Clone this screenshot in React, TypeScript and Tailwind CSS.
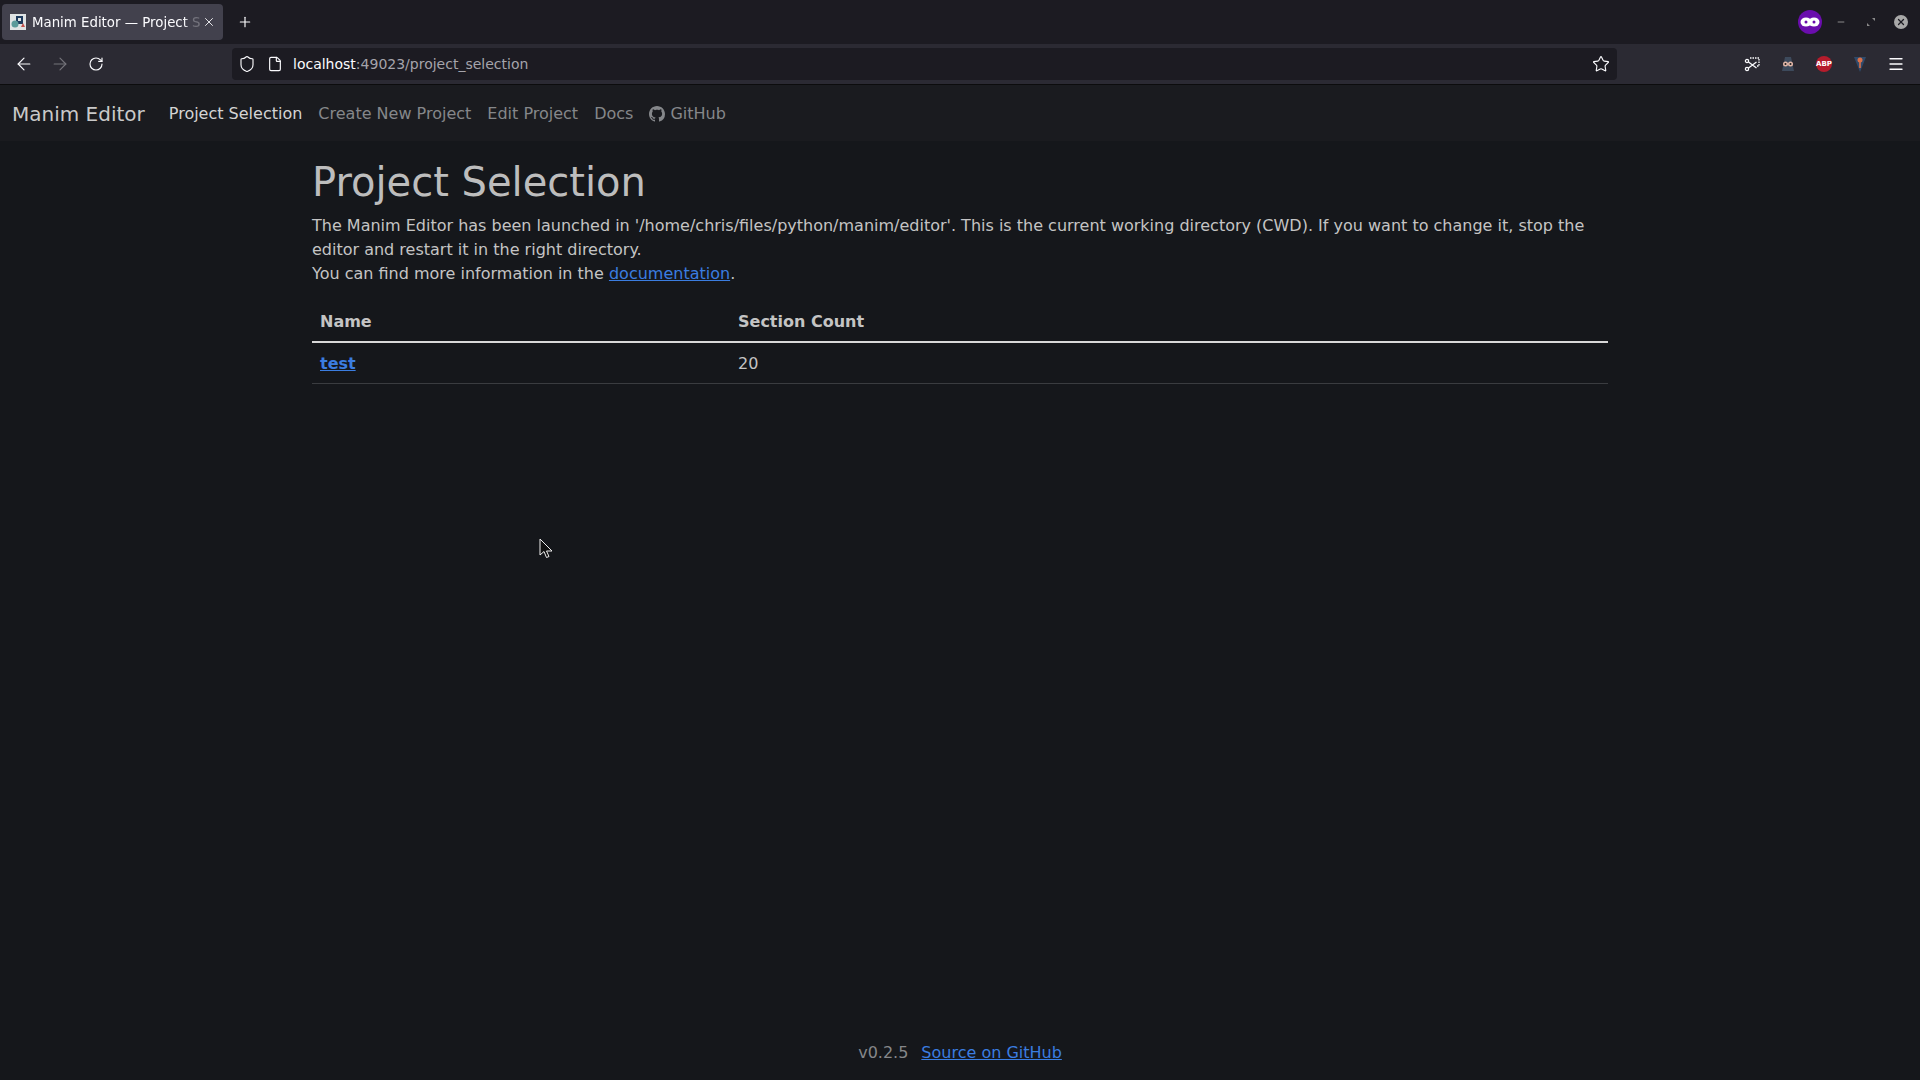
import { ArrowLeft, ArrowRight, RotateCw, Shield, File, Star, Menu, Plus, X, Minus } from "lucide-react";

function GithubIcon() {
  return (
    <svg viewBox="0 0 16 16" width="16" height="16" fill="currentColor" className="mr-[5px]">
      <path d="M8 0C3.58 0 0 3.58 0 8c0 3.54 2.29 6.53 5.47 7.59.4.07.55-.17.55-.38 0-.19-.01-.82-.01-1.49-2.01.37-2.53-.49-2.69-.94-.09-.23-.48-.94-.82-1.13-.28-.15-.68-.52-.01-.53.63-.01 1.08.58 1.23.82.72 1.21 1.87.87 2.33.66.07-.52.28-.87.51-1.07-1.78-.2-3.64-.89-3.64-3.95 0-.87.31-1.59.82-2.15-.08-.2-.36-1.02.08-2.12 0 0 .67-.21 2.2.82.64-.18 1.32-.27 2-.27s1.36.09 2 .27c1.53-1.04 2.2-.82 2.2-.82.44 1.1.16 1.92.08 2.12.51.56.82 1.27.82 2.15 0 3.07-1.87 3.75-3.65 3.95.29.25.54.73.54 1.48 0 1.07-.01 1.93-.01 2.2 0 .21.15.46.55.38A8.01 8.01 0 0 0 16 8c0-4.42-3.58-8-8-8z" />
    </svg>
  );
}

function Favicon() {
  return (
    <svg viewBox="0 0 16 16" width="16" height="16" className="mr-[6px] shrink-0">
      <rect width="16" height="16" fill="#dfe3e4" />
      <rect x="6" y="2" width="7" height="8" fill="#1d3a5c" />
      <rect x="8" y="4" width="3" height="3" fill="#dfe3e4" />
      <circle cx="5" cy="10" r="3.5" fill="#5a9a9a" />
      <path d="M11 13l2-4 2 4z" fill="#c2504a" />
    </svg>
  );
}

function BrowserChrome() {
  return (
    <div className="shrink-0 font-['DejaVu_Sans',sans-serif] text-[13px]">
      {/* tab strip */}
      <div className="flex h-[44px] items-center bg-[#1c1b22] pl-[2px]">
        <div className="flex h-[36px] w-[221px] items-center rounded bg-[#42414d] pl-[8px] pr-[7px] text-[#fbfbfe]">
          <Favicon />
          <span className="whitespace-nowrap pt-[1px] text-[13.33px] [mask-image:linear-gradient(to_right,black_90%,#0004_95%)]">
            Manim Editor — Project S
          </span>
          <X size={14} strokeWidth={1.5} className="ml-auto shrink-0" />
        </div>
        <Plus size={16} strokeWidth={1.75} className="ml-[14px] text-[#fbfbfe]" />
        <div className="ml-auto flex items-center">
          <svg viewBox="0 0 24 24" width="24" height="24">
            <circle cx="12" cy="12" r="12" fill="#6a0dad" />
            <ellipse cx="8" cy="12" rx="5.5" ry="4.5" fill="#fff" />
            <ellipse cx="16" cy="12" rx="5.5" ry="4.5" fill="#fff" />
            <circle cx="8" cy="12" r="1.5" fill="#6a0dad" />
            <circle cx="16" cy="12" r="1.5" fill="#6a0dad" />
          </svg>
          <Minus size={10} strokeWidth={2} className="ml-[14px] text-[#a0a0a0]" />
          <svg viewBox="0 0 10 10" width="10" height="10" className="ml-[20px]">
            <path d="M6 1h3v3zM1 6l3 3H1z" fill="#8a8a8a" />
          </svg>
          <div className="ml-[18px] mr-[12px] flex h-[14px] w-[14px] items-center justify-center rounded-full bg-[#a8a8a8]">
            <X size={10} strokeWidth={3} className="text-[#1c1b22]" />
          </div>
        </div>
      </div>
      {/* nav toolbar */}
      <div className="flex h-[41px] items-center border-b border-[#0c0c0d] bg-[#2b2a33] pl-[14px] text-[#fbfbfe]">
        <ArrowLeft size={20} strokeWidth={1.4} />
        <ArrowRight size={20} strokeWidth={1.4} className="ml-[16px] text-[#75747b]" />
        <RotateCw size={16} strokeWidth={1.75} className="ml-[18px]" />
        <div className="ml-[128px] flex h-[32px] w-[1385px] items-center rounded bg-[#1c1b22] pl-[6px] pr-[7px]">
          <Shield size={18} strokeWidth={1.5} />
          <File size={16} strokeWidth={1.75} className="ml-[11px]" />
          <span className="ml-[10px] text-[14px]">
            localhost<span className="text-[#a5a4ab]">:49023/project_selection</span>
          </span>
          <Star size={18} strokeWidth={1.5} className="ml-auto" />
        </div>
        <div className="ml-auto flex items-center gap-[20px] pr-[16px]">
          <svg viewBox="0 0 16 16" width="16" height="16" fill="none" stroke="#fbfbfe" strokeWidth="1.3">
            <path d="M6 2h9v8h-3" strokeDasharray="1.5 1" />
            <circle cx="3" cy="5" r="1.6" />
            <circle cx="3" cy="13" r="1.6" />
            <path d="M4.5 6l8 6M4.5 12l8-6" />
          </svg>
          <svg viewBox="0 0 16 16" width="16" height="16">
            <path d="M5 1h6l3 14H2z" fill="#3d4a5c" />
            <circle cx="5.5" cy="8" r="2.5" fill="#e4b7a8" />
            <circle cx="10.5" cy="8" r="2.5" fill="#e4b7a8" />
            <circle cx="5.5" cy="8" r="1" fill="#222" />
            <circle cx="10.5" cy="8" r="1" fill="#222" />
          </svg>
          <div className="flex h-[16px] w-[16px] items-center justify-center rounded-full bg-[#b51c2c] text-[7px] font-bold leading-none text-white">
            ABP
          </div>
          <svg viewBox="0 0 16 16" width="16" height="16">
            <path d="M2 1h12l-6 15z" fill="#2f4a6b" />
            <circle cx="8" cy="4" r="2.5" fill="#d9714a" />
            <rect x="7.2" y="5" width="1.6" height="7" fill="#d9714a" />
          </svg>
          <Menu size={18} strokeWidth={1.75} className="-mx-[1px]" />
        </div>
      </div>
    </div>
  );
}

export default function App() {
  return (
    <div className="relative flex h-screen flex-col overflow-hidden bg-[#15171b] font-['DejaVu_Sans',sans-serif] text-[#c4c4c4]">
      <BrowserChrome />

      <nav className="flex h-[56px] shrink-0 items-center bg-[#1a1b1f] px-3 pt-[2px]">
        <a className="mr-4 text-[20px] text-[#c9c9c9]">Manim Editor</a>
        <div className="flex text-[16px] text-[#85878a]">
          <a className="px-2 text-[#d4d4d4]">Project Selection</a>
          <a className="px-2">Create New Project</a>
          <a className="px-2">Edit Project</a>
          <a className="px-2">Docs</a>
          <a className="flex items-center px-2">
            <GithubIcon />
            GitHub
          </a>
        </div>
      </nav>

      <main className="mx-auto w-[1320px] px-3 pt-[17px]">
        <h1 className="mb-2 text-[40px] leading-[48px] text-[#bdbdbd]">Project Selection</h1>
        <p className="mb-4 text-[16px] leading-[24px]">
          The Manim Editor has been launched in '/home/chris/files/python/manim/editor'. This is the current working directory (CWD). If you want to change it, stop the editor and restart it in the right directory.
          <br />
          You can find more information in the{" "}
          <a className="text-[#3b7de0] underline">documentation</a>.
        </p>
        <table className="w-full text-left text-[16px] leading-[24px]">
          <thead>
            <tr className="border-b-2 border-[#d8d8d8]">
              <th className="w-[418px] px-2 pb-[7px] pt-2 font-bold">Name</th>
              <th className="px-2 pb-[7px] pt-2 font-bold">Section Count</th>
            </tr>
          </thead>
          <tbody>
            <tr className="border-b border-[#3a3c40]">
              <td className="px-2 pb-[7px] pt-[9px]">
                <a className="font-bold text-[#3b7de0] underline">test</a>
              </td>
              <td className="px-2 pb-[7px] pt-[9px]">20</td>
            </tr>
          </tbody>
        </table>
      </main>

      <footer className="mt-auto flex justify-center gap-[13px] pb-[15px] text-[16px] leading-[24px]">
        <span className="text-[#85878a]">v0.2.5</span>
        <a className="text-[#3b7de0] underline">Source on GitHub</a>
      </footer>

      {/* mouse cursor */}
      <svg viewBox="0 0 14 22" width="14" height="22" className="absolute left-[539px] top-[538px]">
        <path d="M1 1v16l4-3.5 2.5 6 2.5-1-2.5-5.5H13z" fill="#111" stroke="#eee" strokeWidth="1" />
      </svg>
    </div>
  );
}
